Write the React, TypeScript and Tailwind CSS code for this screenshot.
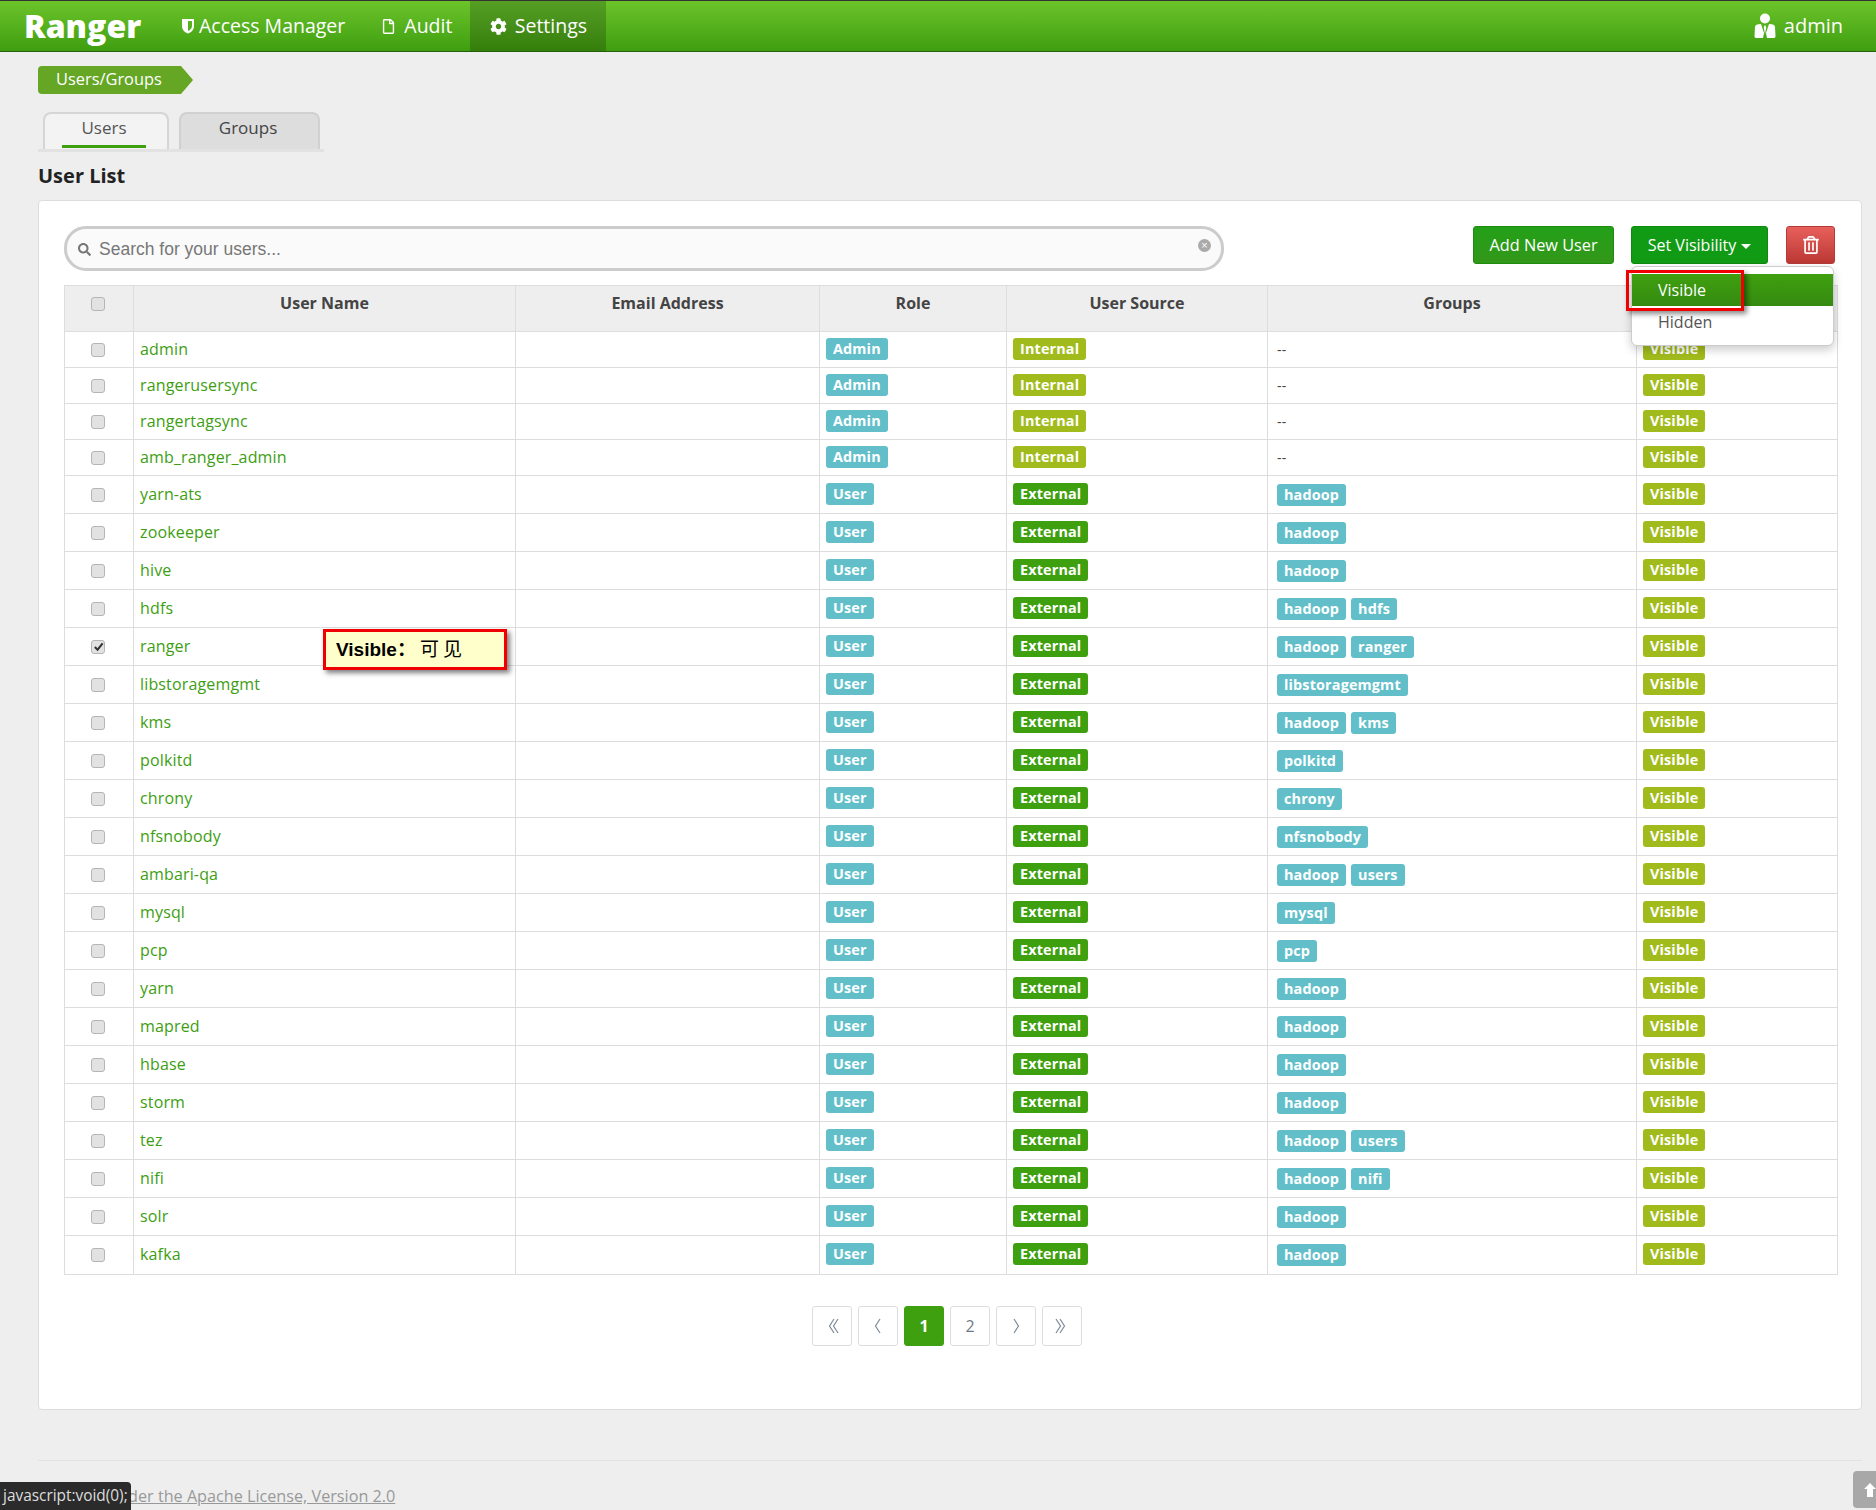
import { FaCog, FaRegFile, FaSearch, FaRegTrashAlt } from "react-icons/fa"

type User = { name: string; role: "Admin" | "User"; source: "Internal" | "External"; groups: string[]; checked?: boolean }

const internal = ["admin", "rangerusersync", "rangertagsync", "amb_ranger_admin"]

const external: [string, string[]][] = [
    ["yarn-ats", ["hadoop"]],
    ["zookeeper", ["hadoop"]],
    ["hive", ["hadoop"]],
    ["hdfs", ["hadoop", "hdfs"]],
    ["ranger", ["hadoop", "ranger"]],
    ["libstoragemgmt", ["libstoragemgmt"]],
    ["kms", ["hadoop", "kms"]],
    ["polkitd", ["polkitd"]],
    ["chrony", ["chrony"]],
    ["nfsnobody", ["nfsnobody"]],
    ["ambari-qa", ["hadoop", "users"]],
    ["mysql", ["mysql"]],
    ["pcp", ["pcp"]],
    ["yarn", ["hadoop"]],
    ["mapred", ["hadoop"]],
    ["hbase", ["hadoop"]],
    ["storm", ["hadoop"]],
    ["tez", ["hadoop", "users"]],
    ["nifi", ["hadoop", "nifi"]],
    ["solr", ["hadoop"]],
    ["kafka", ["hadoop"]],
]

const users: User[] = [
    ...internal.map((name): User => ({ name, role: "Admin", source: "Internal", groups: [] })),
    ...external.map(([name, groups]): User => ({ name, role: "User", source: "External", groups, checked: name === "ranger" })),
]

const Tag = ({ children, className }: { children: string; className: string }) => (
    <span className={`inline-block h-[22px] rounded-[3px] px-[7px] text-[14.4px] leading-[22px] font-bold text-white ${className}`}>
        {children}
    </span>
)

const Checkbox = ({ checked }: { checked?: boolean }) => (
    <span className="relative right-[1px] mx-auto flex size-[14px] items-center justify-center rounded-[3px] border border-[#b5b5b5] bg-[#e2e2e2]">
        {checked && (
            <svg viewBox="0 0 12 12" className="size-[11px]">
                <path d="M2 6.5 L5 9.5 L10.5 2.5" fill="none" stroke="#333" strokeWidth="2.2" />
            </svg>
        )}
    </span>
)

const Chevrons = ({ dir, double }: { dir: "left" | "right"; double?: boolean }) => {
    const flip = dir === "right" ? "scale(-1 1) translate(-14 0)" : undefined
    return (
        <svg viewBox="0 0 14 16" className="h-[16px] w-[14px]">
            <g transform={flip} fill="none" stroke="#7d8a99" strokeWidth="1.2">
                <path d="M9 1 L4.5 8 L9 15" />
                {double && <path d="M13 1 L8.5 8 L13 15" />}
            </g>
        </svg>
    )
}

const PageButton = ({ children, active }: { children: React.ReactNode; active?: boolean }) => (
    <div
        className={`flex size-[40px] items-center justify-center rounded-[3px] border text-[16px] ${
            active ? "border-[#3fa00f] bg-[#3fa00f] font-bold text-white" : "border-[#ddd] bg-white text-[#6f7b88]"
        }`}
    >
        {children}
    </div>
)

const App = () => {
    return (
        <div className="relative h-[1510px] overflow-hidden bg-[#eeeeee] font-['Open_Sans',sans-serif] text-[#444]">
            <header className="flex h-[52px] items-stretch border-t border-b border-t-[#333] border-b-[#245f0a] bg-gradient-to-b from-[#6cc42a] to-[#3e9e0f] text-white">
                <div className="ml-[24px] w-[151px] self-center text-[32px] leading-none font-extrabold">Ranger</div>
                <nav className="ml-[5px] flex text-[19.5px]">
                    <div className="flex items-center gap-[3px] pr-[36px]">
                        <svg viewBox="0 0 14 16" className="h-[16px] w-[16px]">
                            <path fillRule="evenodd" fill="#fff" d="M1 1 H13 V8 C13 12 10 14.5 7 15.5 C4 14.5 1 12 1 8 Z M7 3 V13 C9 12 11 10.500 11 8 V3 Z" />
                        </svg>
                        <span>Access Manager</span>
                    </div>
                    <div className="flex items-center gap-[8px] pr-[18px]">
                        <FaRegFile className="size-[15px]" />
                        <span>Audit</span>
                    </div>
                    <div className="flex w-[136px] items-center justify-center gap-[8px] bg-gradient-to-b from-[#569f24] to-[#347e0b]">
                        <FaCog className="size-[17px]" />
                        <span>Settings</span>
                    </div>
                </nav>
                <div className="ml-auto mr-[33px] flex items-center gap-[8px] text-[20px]">
                    <svg viewBox="0 0 22 26" className="h-[26px] w-[22px]">
                        <circle cx="11" cy="5.500" r="5" fill="#fff" />
                        <path fill="#fff" d="M1 14 C1 12 3 11 7 11 L10 20 L9 25 H2 C1 25 0.500 24 0.500 23 Z M21 14 C21 12 19 11 15 11 L12 20 L13 25 H20 C21 25 21.500 24 21.500 23 Z" />
                        <path fill="#fff" d="M11 12 L12.300 14 L11 21 L9.700 14 Z" />
                    </svg>
                    <span>admin</span>
                </div>
            </header>

            <main className="pr-[14px] pl-[38px]">
                <div className="mt-[14px] flex h-[28px] w-[155px] items-center rounded-l-[4px] bg-[#65a625] pb-[1px] pl-[18px] text-[16.4px] text-white [clip-path:polygon(0_0,calc(100%-12px)_0,100%_50%,calc(100%-12px)_100%,0_100%)]">
                    Users/Groups
                </div>

                <div className="mt-[18px] flex h-[40px] w-[286px] gap-[10px] border-b-[3px] border-[#e2e2e2] pl-[5px] text-[17px]">
                    <div className="relative w-[126px] rounded-t-[8px] border-x-2 border-t-2 border-[#d5d5d5] bg-[#f3f3f3] pt-[1px] pr-[4px] text-center text-[#555]">
                        Users
                        <div className="absolute bottom-[1px] left-[17px] h-[3px] w-[84px] bg-[#3fa00f]" />
                    </div>
                    <div className="w-[141px] rounded-t-[8px] border-x-2 border-t-2 border-[#d0d0d0] bg-[#dddddd] pt-[1px] pr-[3px] text-center text-[#444]">
                        Groups
                    </div>
                </div>

                <h3 className="mt-[11px] text-[20px] leading-[26px] font-bold text-[#222]">User List</h3>

                <section className="relative mt-[11px] h-[1210px] rounded-[4px] border border-[#dddddd] bg-white pt-[25px] pr-[24px] pl-[25px]">
                    <div className="flex items-start">
                        <div className="flex h-[45px] w-[1160px] shrink-0 items-center rounded-[22px] border-[3px] border-[#cccccc] bg-[#fafafa] pt-[1px] pr-[10px] pl-[11px] font-['Liberation_Sans',sans-serif] text-[17.5px] text-[#777]">
                            <FaSearch className="mr-[8px] size-[13px] text-[#777]" />
                            <span>Search for your users...</span>
                            <span className="ml-auto mb-[7px] flex size-[13px] items-center justify-center rounded-full bg-[#aaa] text-[11px] leading-none text-white">×</span>
                        </div>
                        <div className="ml-[249px] flex h-[38px] w-[141px] shrink-0 items-center justify-center rounded-[3px] border border-[#1e8a0e] bg-gradient-to-b from-[#22a018] to-[#33971a] text-[16.3px] text-white">
                            Add New User
                        </div>
                        <div className="ml-[17px] flex h-[38px] w-[137px] shrink-0 items-center justify-center gap-[5px] rounded-[3px] border border-[#0e8a0e] bg-[#119b14] text-[16px] text-white">
                            Set Visibility
                            <span className="mt-[2px] border-x-[5px] border-t-[5px] border-x-transparent border-t-white" />
                        </div>
                        <div className="ml-[18px] flex h-[38px] w-[49px] shrink-0 items-center justify-center rounded-[3px] border border-[#b53a3a] bg-gradient-to-b from-[#e8605c] to-[#bb3733] text-white">
                            <FaRegTrashAlt className="size-[18px]" />
                        </div>
                    </div>

                    <table className="mt-[14px] w-[1773px] table-fixed border-collapse border border-[#dddddd] text-[16px] tracking-[0.15px]">
                        <colgroup>
                            <col className="w-[69px]" />
                            <col className="w-[382px]" />
                            <col className="w-[304px]" />
                            <col className="w-[187px]" />
                            <col className="w-[261px]" />
                            <col className="w-[369px]" />
                            <col className="w-[201px]" />
                        </colgroup>
                        <thead>
                            <tr className="h-[46px] bg-[#eeeeee] text-[16px] font-bold tracking-normal text-[#444]">
                                <th className="border border-[#dddddd] pb-[10px] font-bold">
                                    <Checkbox />
                                </th>
                                {["User Name", "Email Address", "Role", "User Source", "Groups", ""].map((h) => (
                                    <th key={h} className="border border-[#dddddd] pb-[12px] text-center font-bold">
                                        {h}
                                    </th>
                                ))}
                            </tr>
                        </thead>
                        <tbody>
                            {users.map((u, i) => (
                                <tr key={u.name} className={u.role === "Admin" ? "h-[36px]" : i === users.length - 1 ? "h-[39px]" : "h-[38px]"}>
                                    <td className="border border-[#dddddd]">
                                        <Checkbox checked={u.checked} />
                                    </td>
                                    <td className="border border-[#dddddd] pb-[2px] pl-[6px] text-[#3e9e12]">{u.name}</td>
                                    <td className="border border-[#dddddd]" />
                                    <td className="border border-[#dddddd] pb-[4px] pl-[6px]">
                                        <Tag className="bg-[#62bfc9]">{u.role}</Tag>
                                    </td>
                                    <td className="border border-[#dddddd] pb-[4px] pl-[6px]">
                                        <Tag className={u.source === "Internal" ? "bg-[#a2bb1c]" : "bg-[#3fa00f]"}>{u.source}</Tag>
                                    </td>
                                    <td className="border border-[#dddddd] pl-[9px] text-[14px]">
                                        <div className="flex gap-[5px]">
                                            {u.groups.length === 0 && <span className="text-[#444]">--</span>}
                                            {u.groups.map((g) => (
                                                <Tag key={g} className="bg-[#62bfc9]">{g}</Tag>
                                            ))}
                                        </div>
                                    </td>
                                    <td className="border border-[#dddddd] pb-[4px] pl-[6px]">
                                        <Tag className="bg-[#a2bb1c]">Visible</Tag>
                                    </td>
                                </tr>
                            ))}
                        </tbody>
                    </table>

                    <div className="mt-[31px] flex w-[1766px] justify-center gap-[6px]">
                        <PageButton><Chevrons dir="left" double /></PageButton>
                        <PageButton><Chevrons dir="left" /></PageButton>
                        <PageButton active>1</PageButton>
                        <PageButton>2</PageButton>
                        <PageButton><Chevrons dir="right" /></PageButton>
                        <PageButton><Chevrons dir="right" double /></PageButton>
                    </div>

                    {/* dropdown of Set Visibility, open over the table */}
                    <div className="absolute top-[65px] left-[1592px] h-[80px] w-[203px] rounded-[6px] border border-[#cccccc] bg-white pt-[7px] text-[16px] shadow-[0_4px_10px_rgba(0,0,0,0.2)]">
                        <div className="flex h-[32px] items-center bg-gradient-to-b from-[#3fa00f] to-[#358a10] pl-[26px] text-white">Visible</div>
                        <div className="flex h-[32px] items-center pl-[26px] text-[#555]">Hidden</div>
                    </div>
                    <div className="absolute top-[69px] left-[1587px] h-[41px] w-[118px] border-[3px] border-[#f00000] shadow-[3px_3px_5px_rgba(0,0,0,0.45)]" />

                    {/* note pinned on the ranger row */}
                    <div className="absolute top-[428px] left-[284px] flex h-[41px] w-[184px] items-center border-[3px] border-[#f00000] bg-[#ffffcc] pt-[2px] pl-[10px] font-['Liberation_Sans','Noto_Sans_CJK_SC',sans-serif] text-[19px] font-bold text-black shadow-[3px_3px_5px_rgba(0,0,0,0.5)]">
                        Visible：<span className="ml-[4px] font-normal tracking-[4px]">可见</span>
                    </div>
                </section>

                <footer className="mt-[50px] border-t border-[#e2e2e2] pt-[23px] text-[16.2px] text-[#999] underline">
                    Licensed under the Apache License, Version 2.0
                </footer>
            </main>

            <div className="absolute bottom-0 left-0 flex h-[28px] w-[131px] items-center rounded-tr-[4px] bg-[#2b2b2b] pl-[3px] text-[15.4px] text-[#dddddd]">
                javascript:void(0);
            </div>
            <div className="absolute right-0 bottom-[2px] flex h-[37px] w-[23px] items-center justify-end rounded-l-[4px] bg-[#a8a8a8]">
                <svg viewBox="0 0 12 14" className="h-[14px] w-[12px]">
                    <path fill="#fff" d="M6 0 L12 6 H9 V14 H3 V6 H0 Z" />
                </svg>
            </div>
        </div>
    )
}

export default App
